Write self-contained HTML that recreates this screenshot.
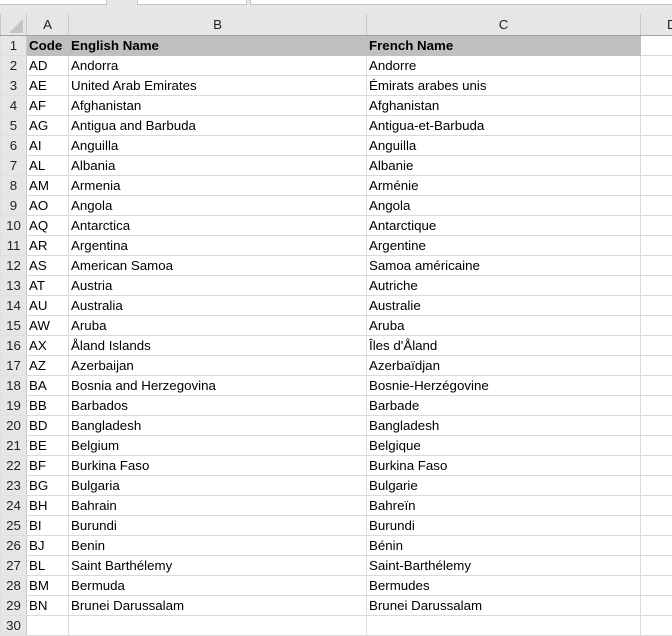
<!DOCTYPE html>
<html><head><meta charset="utf-8"><style>
body{margin:0;width:672px;height:618px;overflow:hidden;background:#e6e6e6;font-family:"Liberation Sans",Arial,sans-serif;position:relative}
.tb{position:absolute;top:-2px;height:5px;background:#fff;border:1px solid #c6c6c6}
table{position:absolute;top:14px;left:0;width:700px;border-collapse:collapse;table-layout:fixed;font-size:13.3px;color:#000}
td{height:19px;padding:0 0 0 2px;border:1px solid #dadada;white-space:nowrap;overflow:hidden;background:#fff;line-height:19px}
tr.h td{height:21px;background:#e6e6e6;border-color:#c8c8c8;border-top:none;border-bottom:1px solid #9f9f9f;text-align:center;padding:0;color:#222}
td.r{background:#e6e6e6;border-color:#e0e0e0;border-right:1px solid #c8c8c8;text-align:center;padding:0;color:#222}
tr.f td.c{background:#bfbfbf;font-weight:bold;border-color:#bfbfbf}
</style></head><body>
<div class="tb" style="left:-1px;width:106px"></div>
<div class="tb" style="left:137px;width:108px"></div>
<div class="tb" style="left:250px;width:430px"></div>
<table>
<colgroup><col style="width:26px"><col style="width:42px"><col style="width:298px"><col style="width:274px"><col style="width:60px"></colgroup>
<tr class="h"><td style="position:relative"><svg width="14" height="14" style="position:absolute;right:3px;bottom:2px"><polygon points="14,0 14,14 0,14" fill="#c4c4c4"/></svg></td><td>A</td><td>B</td><td>C</td><td style="text-align:left;padding-left:26px">D</td></tr>
<tr class="f"><td class="r">1</td><td class="c">Code</td><td class="c">English Name</td><td class="c">French Name</td><td></td></tr>
<tr><td class="r">2</td><td>AD</td><td>Andorra</td><td>Andorre</td><td></td></tr>
<tr><td class="r">3</td><td>AE</td><td>United Arab Emirates</td><td>Émirats arabes unis</td><td></td></tr>
<tr><td class="r">4</td><td>AF</td><td>Afghanistan</td><td>Afghanistan</td><td></td></tr>
<tr><td class="r">5</td><td>AG</td><td>Antigua and Barbuda</td><td>Antigua-et-Barbuda</td><td></td></tr>
<tr><td class="r">6</td><td>AI</td><td>Anguilla</td><td>Anguilla</td><td></td></tr>
<tr><td class="r">7</td><td>AL</td><td>Albania</td><td>Albanie</td><td></td></tr>
<tr><td class="r">8</td><td>AM</td><td>Armenia</td><td>Arménie</td><td></td></tr>
<tr><td class="r">9</td><td>AO</td><td>Angola</td><td>Angola</td><td></td></tr>
<tr><td class="r">10</td><td>AQ</td><td>Antarctica</td><td>Antarctique</td><td></td></tr>
<tr><td class="r">11</td><td>AR</td><td>Argentina</td><td>Argentine</td><td></td></tr>
<tr><td class="r">12</td><td>AS</td><td>American Samoa</td><td>Samoa américaine</td><td></td></tr>
<tr><td class="r">13</td><td>AT</td><td>Austria</td><td>Autriche</td><td></td></tr>
<tr><td class="r">14</td><td>AU</td><td>Australia</td><td>Australie</td><td></td></tr>
<tr><td class="r">15</td><td>AW</td><td>Aruba</td><td>Aruba</td><td></td></tr>
<tr><td class="r">16</td><td>AX</td><td>Åland Islands</td><td>Îles d'Åland</td><td></td></tr>
<tr><td class="r">17</td><td>AZ</td><td>Azerbaijan</td><td>Azerbaïdjan</td><td></td></tr>
<tr><td class="r">18</td><td>BA</td><td>Bosnia and Herzegovina</td><td>Bosnie-Herzégovine</td><td></td></tr>
<tr><td class="r">19</td><td>BB</td><td>Barbados</td><td>Barbade</td><td></td></tr>
<tr><td class="r">20</td><td>BD</td><td>Bangladesh</td><td>Bangladesh</td><td></td></tr>
<tr><td class="r">21</td><td>BE</td><td>Belgium</td><td>Belgique</td><td></td></tr>
<tr><td class="r">22</td><td>BF</td><td>Burkina Faso</td><td>Burkina Faso</td><td></td></tr>
<tr><td class="r">23</td><td>BG</td><td>Bulgaria</td><td>Bulgarie</td><td></td></tr>
<tr><td class="r">24</td><td>BH</td><td>Bahrain</td><td>Bahreïn</td><td></td></tr>
<tr><td class="r">25</td><td>BI</td><td>Burundi</td><td>Burundi</td><td></td></tr>
<tr><td class="r">26</td><td>BJ</td><td>Benin</td><td>Bénin</td><td></td></tr>
<tr><td class="r">27</td><td>BL</td><td>Saint Barthélemy</td><td>Saint-Barthélemy</td><td></td></tr>
<tr><td class="r">28</td><td>BM</td><td>Bermuda</td><td>Bermudes</td><td></td></tr>
<tr><td class="r">29</td><td>BN</td><td>Brunei Darussalam</td><td>Brunei Darussalam</td><td></td></tr>
<tr><td class="r">30</td><td></td><td></td><td></td><td></td></tr>
</table>
</body></html>
